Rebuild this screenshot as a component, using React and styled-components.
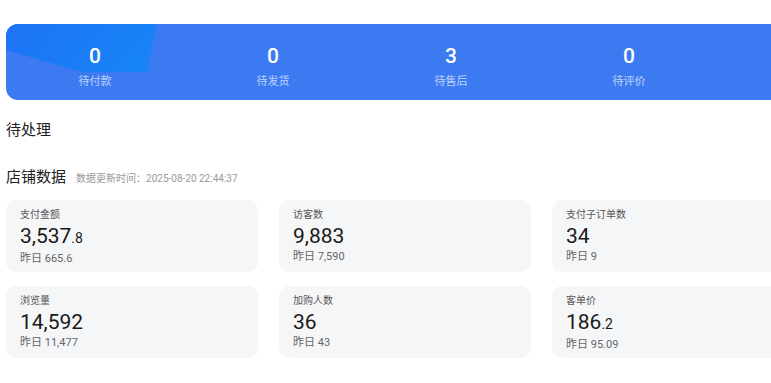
import React from "react";
import styled, { createGlobalStyle } from "styled-components";

const GlobalStyle = createGlobalStyle`
  body {
    margin: 0;
    background: #fff;
    overflow: hidden;
    font-family: Roboto, "Noto Sans CJK SC", sans-serif;
  }
`;

const Page = styled.div`
  width: 804px;
  padding: 24px 0 0 6px;
`;

const Banner = styled.div`
  position: relative;
  height: 76px;
  border-radius: 12px;
  background: #3c7af2;
  overflow: hidden;
  display: grid;
  grid-template-columns: repeat(4, 178px);
`;

const Glow = styled.svg`
  position: absolute;
  left: 0;
  top: 0;
`;

const Stat = styled.div`
  position: relative;
  display: flex;
  flex-direction: column;
  align-items: center;
  padding-top: 18px;
`;

const StatNum = styled.div`
  color: #fff;
  font-size: 21px;
  font-weight: 500;
  line-height: 28px;
`;

const StatLabel = styled.div`
  color: rgba(255, 255, 255, 0.68);
  font-size: 11px;
  line-height: 16px;
  margin-top: 4px;
`;

const Heading = styled.div`
  font-size: 15px;
  color: #222;
  line-height: 20px;
  margin-top: ${(p) => p.top}px;
  display: flex;
  align-items: baseline;
  gap: 10px;
`;

const UpdateTime = styled.span`
  font-size: 10px;
  color: #999;
`;

const Grid = styled.div`
  margin-top: 11px;
  display: grid;
  grid-template-columns: repeat(3, 252px);
  column-gap: 21px;
  row-gap: 14px;
`;

const Card = styled.div`
  height: 72px;
  border-radius: 10px;
  background: #f5f6f8;
  padding: 8px 14px 0;
  box-sizing: border-box;
`;

const CardLabel = styled.div`
  font-size: 10px;
  color: #555;
  line-height: 14px;
`;

const CardValue = styled.div`
  font-size: 21px;
  color: #1a1a1a;
  line-height: 28px;
  small {
    font-size: 14px;
  }
`;

const CardPrev = styled.div`
  font-size: 11px;
  color: #666;
  line-height: 14px;
`;

const todo = [
  { n: 0, label: "待付款" },
  { n: 0, label: "待发货" },
  { n: 3, label: "待售后" },
  { n: 0, label: "待评价" },
];

const metrics = [
  { label: "支付金额", int: "3,537", dec: ".8", prev: "665.6" },
  { label: "访客数", int: "9,883", prev: "7,590" },
  { label: "支付子订单数", int: "34", prev: "9" },
  { label: "浏览量", int: "14,592", prev: "11,477" },
  { label: "加购人数", int: "36", prev: "43" },
  { label: "客单价", int: "186", dec: ".2", prev: "95.09" },
];

export default function App() {
  return (
    <>
      <GlobalStyle />
      <Page>
        <Banner>
          <Glow width="160" height="76" viewBox="0 0 160 76">
            <defs>
              <linearGradient id="g" x1="0" y1="0" x2="1" y2="0.3">
                <stop offset="0" stopColor="#1d72f5" />
                <stop offset="1" stopColor="#1883f7" />
              </linearGradient>
            </defs>
            <polygon points="0,0 151,0 141,48 76,48 0,26" fill="url(#g)" />
          </Glow>
          {todo.map((t) => (
            <Stat key={t.label}>
              <StatNum>{t.n}</StatNum>
              <StatLabel>{t.label}</StatLabel>
            </Stat>
          ))}
        </Banner>
        <Heading top={20}>待处理</Heading>
        <Heading top={27}>
          店铺数据
          <UpdateTime>数据更新时间：2025-08-20 22:44:37</UpdateTime>
        </Heading>
        <Grid>
          {metrics.map((m) => (
            <Card key={m.label}>
              <CardLabel>{m.label}</CardLabel>
              <CardValue>
                {m.int}
                {m.dec && <small>{m.dec}</small>}
              </CardValue>
              <CardPrev>昨日 {m.prev}</CardPrev>
            </Card>
          ))}
        </Grid>
      </Page>
    </>
  );
}
